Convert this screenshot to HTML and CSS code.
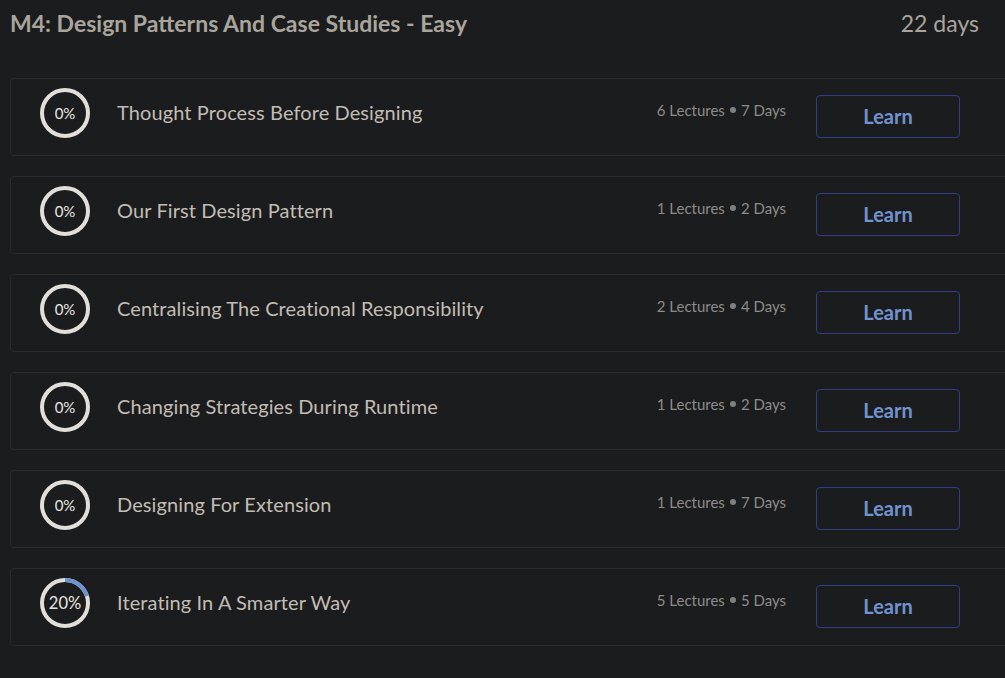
FILE: index.html
```html
<!DOCTYPE html>
<html>
<head>
<meta charset="utf-8">
<link rel="stylesheet" href="styles.css">
</head>
<body>
<div class="page">
  <header class="module-head">
    <h1 class="module-title">M4: Design Patterns And Case Studies - Easy</h1>
    <span class="module-days">22 days</span>
  </header>
  <div class="list">
    <div class="card">
      <div class="left">
        <div class="ring"><svg viewBox="0 0 50 50" width="50" height="50"><circle cx="25" cy="25" r="23" class="track"/></svg><span>0%</span></div>
        <div class="name">Thought Process Before Designing</div>
      </div>
      <div class="meta">6 Lectures <span class="dot"></span> 7 Days</div>
      <button class="learn">Learn</button>
    </div>
    <div class="card">
      <div class="left">
        <div class="ring"><svg viewBox="0 0 50 50" width="50" height="50"><circle cx="25" cy="25" r="23" class="track"/></svg><span>0%</span></div>
        <div class="name">Our First Design Pattern</div>
      </div>
      <div class="meta">1 Lectures <span class="dot"></span> 2 Days</div>
      <button class="learn">Learn</button>
    </div>
    <div class="card">
      <div class="left">
        <div class="ring"><svg viewBox="0 0 50 50" width="50" height="50"><circle cx="25" cy="25" r="23" class="track"/></svg><span>0%</span></div>
        <div class="name">Centralising The Creational Responsibility</div>
      </div>
      <div class="meta">2 Lectures <span class="dot"></span> 4 Days</div>
      <button class="learn">Learn</button>
    </div>
    <div class="card">
      <div class="left">
        <div class="ring"><svg viewBox="0 0 50 50" width="50" height="50"><circle cx="25" cy="25" r="23" class="track"/></svg><span>0%</span></div>
        <div class="name">Changing Strategies During Runtime</div>
      </div>
      <div class="meta">1 Lectures <span class="dot"></span> 2 Days</div>
      <button class="learn">Learn</button>
    </div>
    <div class="card">
      <div class="left">
        <div class="ring"><svg viewBox="0 0 50 50" width="50" height="50"><circle cx="25" cy="25" r="23" class="track"/></svg><span>0%</span></div>
        <div class="name">Designing For Extension</div>
      </div>
      <div class="meta">1 Lectures <span class="dot"></span> 7 Days</div>
      <button class="learn">Learn</button>
    </div>
    <div class="card">
      <div class="left">
        <div class="ring ring-started"><svg viewBox="0 0 50 50" width="50" height="50"><circle cx="25" cy="25" r="23" class="track"/><circle cx="25" cy="25" r="23" class="prog" stroke-dasharray="28.9 144.5" transform="rotate(-90 25 25)"/></svg><span>20%</span></div>
        <div class="name">Iterating In A Smarter Way</div>
      </div>
      <div class="meta">5 Lectures <span class="dot"></span> 5 Days</div>
      <button class="learn">Learn</button>
    </div>
  </div>
</div>
</body>
</html>
```
FILE: styles.css
```css
html, body {
  margin: 0;
  padding: 0;
  background: #1b1c1e;
  overflow: hidden;
}
body {
  font-family: Lato, "Open Sans", sans-serif;
  width: 1005px;
  height: 678px;
}
.page {
  padding-left: 10px;
  width: 1010px;
}
.module-head {
  display: flex;
  align-items: baseline;
  justify-content: space-between;
  height: 78px;
  padding-right: 41px;
}
.module-title {
  margin: 0;
  padding-top: 9px;
  font-size: 23px;
  font-weight: 700;
  color: #aaa59c;
  letter-spacing: 0;
}
.module-days {
  font-size: 23px;
  color: #aaa59c;
}
.list {
  display: flex;
  flex-direction: column;
  gap: 20px;
}
.card {
  box-sizing: border-box;
  height: 78px;
  border: 1px solid #2a2b2e;
  border-radius: 4px;
  background: #1b1c1e;
  display: flex;
  align-items: center;
  padding-left: 29px;
}
.left {
  display: flex;
  align-items: center;
  flex: 1;
  padding-bottom: 8px;
}
.ring {
  position: relative;
  width: 50px;
  height: 50px;
  flex: none;
}
.ring svg {
  display: block;
}
.ring .track {
  fill: none;
  stroke: #e2dfda;
  stroke-width: 4;
}
.ring .prog {
  fill: none;
  stroke: #6d93cf;
  stroke-width: 4;
}
.ring span {
  position: absolute;
  inset: 0;
  display: flex;
  align-items: center;
  justify-content: center;
  font-size: 15px;
  color: #e8e6e2;
}
.ring-started span {
  font-size: 16.5px;
}
.name {
  margin-left: 27px;
  font-size: 20px;
  letter-spacing: 0.1px;
  color: #c2bdb4;
  padding-bottom: 2px;
}
.meta {
  font-size: 15px;
  color: #8d8c8a;
  padding-bottom: 14px;
  display: flex;
  align-items: center;
  gap: 5px;
}
.dot {
  width: 6px;
  height: 6px;
  border-radius: 50%;
  background: #808080;
  display: inline-block;
}
.learn {
  margin-left: 30px;
  margin-right: 59px;
  margin-bottom: 2px;
  width: 144px;
  height: 43px;
  background: transparent;
  border: 1px solid #333c86;
  border-radius: 4px;
  font-family: Lato, "Open Sans", sans-serif;
  font-size: 20px;
  font-weight: 700;
  color: #7193d0;
  padding: 0;
}
```
